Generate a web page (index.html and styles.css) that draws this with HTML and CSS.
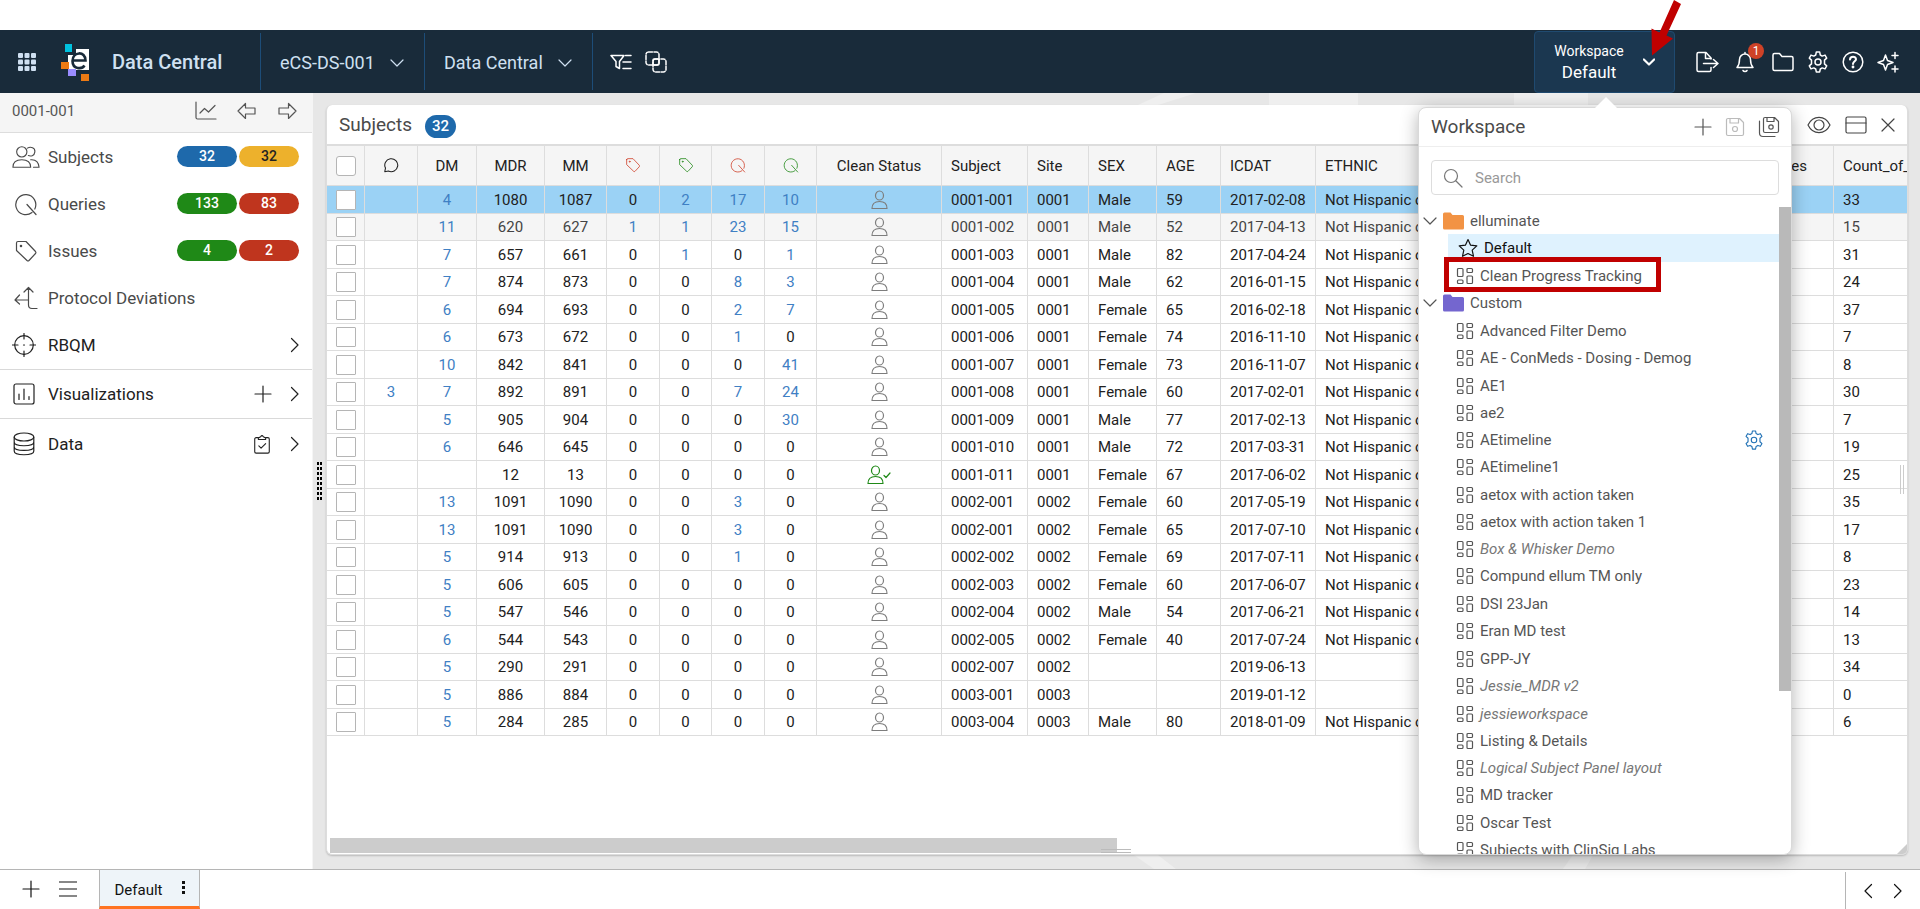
FILE: index.html
```
<!doctype html>
<html lang="en">
<head>
    <meta charset="UTF-8">
    <meta name="viewport" content="width=device-width, initial-scale=1.0">
    <title>Data Central</title>
    <link rel="stylesheet" href="styles.css">
</head>
<body>

<!-- icons -->
<svg class="sprite" aria-hidden="true">
    <symbol id="i-grid" viewBox="0 0 18 18"><g fill="currentColor"><rect width="5" height="5" rx="1"/><rect x="6.5" width="5" height="5" rx="1"/><rect x="13" width="5" height="5" rx="1"/><rect y="6.5" width="5" height="5" rx="1"/><rect x="6.5" y="6.5" width="5" height="5" rx="1"/><rect x="13" y="6.5" width="5" height="5" rx="1"/><rect y="13" width="5" height="5" rx="1"/><rect x="6.5" y="13" width="5" height="5" rx="1"/><rect x="13" y="13" width="5" height="5" rx="1"/></g></symbol>
    <symbol id="i-down" viewBox="0 0 14 14"><path d="M1 4l6 6 6-6"/></symbol>
    <symbol id="i-right" viewBox="0 0 10 16"><path d="M1.5 1.5L8 8l-6.500 6.500"/></symbol>
    <symbol id="i-left" viewBox="0 0 10 16"><path d="M8.500 1.500L2 8l6.500 6.500"/></symbol>
    <symbol id="i-filter" viewBox="0 0 22 18"><path d="M1 2.500h13L9.500 8.500v7l-3.500-2v-5z"/><path d="M15.500 2.500H21M13 9h8M13 15.500h8"/></symbol>
    <symbol id="i-overlap" viewBox="0 0 22 22"><rect x="1" y="1" width="13" height="13" rx="2.500" stroke-dasharray="4 1.500"/><rect x="8" y="8" width="13" height="13" rx="2.500" stroke-dasharray="4 1.500"/><rect x="8" y="8" width="6" height="6" rx="1"/></symbol>
    <symbol id="i-export" viewBox="0 0 24 24"><path d="M16 9V8l-5-5.500H3.500A1.500 1.500 0 0 0 2 4v16a1.500 1.500 0 0 0 1.500 1.500h11A1.500 1.500 0 0 0 16 20v-2.500"/><path d="M10.500 3v5.500H16M8.500 13.500h14M18.500 9.500l4.500 4-4.500 4"/></symbol>
    <symbol id="i-bell" viewBox="0 0 24 24"><path d="M4 17.500h16c-1.800-2-2.500-3.500-2.500-8a5.500 5.500 0 0 0-11 0c0 4.500-.7 6-2.500 8zM12 4V2.500M10 20.500c.8 1.300 3.200 1.300 4 0"/></symbol>
    <symbol id="i-folder" viewBox="0 0 24 24"><path d="M2 19V5a1.500 1.500 0 0 1 1.500-1.500h5l2.500 3h9.500A1.500 1.500 0 0 1 22 8v11a1.500 1.500 0 0 1-1.500 1.500h-17A1.500 1.500 0 0 1 2 19z"/></symbol>
    <symbol id="i-gear" viewBox="0 0 24 24"><path d="M10.300 2.100h3.400l.6 2.900 1.900 1.100 2.800-1 1.700 3-2.200 2v3.800l2.200 2-1.700 3-2.800-1-1.900 1.100-.6 2.900h-3.400l-.6-2.900-1.900-1.100-2.800 1-1.700-3 2.200-2v-3.800l-2.200-2 1.700-3 2.800 1 1.900-1.100z"/><circle cx="12" cy="12" r="3"/></symbol>
    <symbol id="i-help" viewBox="0 0 24 24"><circle cx="12" cy="12" r="9.800"/><path d="M9 9.500c.2-3.800 6-3.500 6-.3 0 2-3 2.300-3 4.800" stroke-width="2"/><circle cx="12" cy="17" r=".7"/></symbol>
    <symbol id="i-sparkle" viewBox="0 0 24 24"><path d="M9.500 5l2 5.500 5.500 2-5.500 2-2 5.500-2-5.500-5.500-2 5.500-2zM19 2.500v6M16 5.500h6M19 16v6M16 19h6"/></symbol>
    <symbol id="i-chart" viewBox="0 0 22 20"><path d="M1 1v15.500a1.500 1.500 0 0 0 1.500 1.500H21M5 12l4.500-4.500 4 3.500L20 4.500"/></symbol>
    <symbol id="i-back" viewBox="0 0 20 18"><path d="M1 9l7.500-7.500v4.500H18v6H8.500v4.500z"/></symbol>
    <symbol id="i-forward" viewBox="0 0 20 18"><path d="M19 9l-7.500-7.500v4.500H2v6h9.500v4.500z"/></symbol>
    <symbol id="i-people" viewBox="0 0 30 24"><circle cx="10.500" cy="6.500" r="5.500"/><path d="M1 23c0-5.500 3.500-8 9.500-8s9.500 2.500 9.500 8zM16.500 2.500c3.500-2 8.500-.5 8 4s-4.500 5-7 4M20 15c5.500-.5 8.500 3 9 8h-6"/></symbol>
    <symbol id="i-query" viewBox="0 0 24 24"><path d="M18 20.500A10 10 0 1 1 20.800 17M13 12.500l9 10"/></symbol>
    <symbol id="i-tag" viewBox="0 0 24 24"><path d="M2.500 4v7.500L13 21.500q1 .8 2 0l6.500-7q.8-1 0-2L12 2.500H4Q2.500 2.500 2.500 4z"/><circle cx="7" cy="7" r=".7"/></symbol>
    <symbol id="i-deviate" viewBox="0 0 24 24"><path d="M14.500 2v17q0 3.500 3.500 3.500h5M10 6l4.500-4.500L19 6M14.500 14H1M5.500 9L1 14l4.500 4"/></symbol>
    <symbol id="i-target" viewBox="0 0 24 24"><circle cx="12" cy="12" r="9.300"/><path d="M12 .5V6M12 18v5.500M.5 12H6M18 12h5.500M11.500 12h1"/></symbol>
    <symbol id="i-bars" viewBox="0 0 24 24"><rect x="2" y="2" width="20" height="20" rx="2"/><path d="M7 12v5.500M12 7v10.500M17 14.500v3"/></symbol>
    <symbol id="i-db" viewBox="0 0 24 24"><ellipse cx="12" cy="5" rx="9.800" ry="4"/><path d="M2.200 5v14c0 5 19.600 5 19.600 0V5M2.200 10c0 5 19.600 5 19.600 0M2.200 14.700c0 5 19.600 5 19.600 0"/></symbol>
    <symbol id="i-clip" viewBox="0 0 18 22"><path d="M5 4H2.500A1.500 1.500 0 0 0 1 5.500v14A1.500 1.500 0 0 0 2.500 21h13a1.500 1.500 0 0 0 1.500-1.500v-14A1.500 1.500 0 0 0 15.500 4H13M5 6V4.500L7.500 3q1.500-2.500 3 0L13 4.500V6zM5.500 13l2.500 2.500 5-5"/></symbol>
    <symbol id="i-plus" viewBox="0 0 18 18"><path d="M9 1v16M1 9h16"/></symbol>
    <symbol id="i-menu" viewBox="0 0 18 18"><path d="M0 2h18M0 9h18M0 16h18"/></symbol>
    <symbol id="i-save" viewBox="0 0 20 20"><path d="M3 1.500h11.500l4 4V17A1.500 1.500 0 0 1 17 18.500H3A1.500 1.500 0 0 1 1.500 17V3A1.500 1.500 0 0 1 3 1.500zM5 1.500v4.500h8.500v-4.500"/><circle cx="10" cy="12" r="2.500"/></symbol>
    <symbol id="i-saveall" viewBox="0 0 22 22"><path d="M7 1.500h9.500l4 4V15A1.500 1.500 0 0 1 19 16.500H7A1.500 1.500 0 0 1 5.500 15V3A1.500 1.500 0 0 1 7 1.500zM9 1.500v4h7v-4M1.500 5v12q0 3.500 3.500 3.500h12"/><circle cx="13" cy="11" r="2.200"/></symbol>
    <symbol id="i-eye" viewBox="0 0 24 18"><path d="M1 9C6 -1.200 18 -1.200 23 9 18 19.200 6 19.200 1 9z"/><circle cx="12" cy="9" r="5"/></symbol>
    <symbol id="i-layout" viewBox="0 0 22 18"><rect x="1" y="1" width="20" height="16" rx="1.500"/><path d="M1 7h20"/></symbol>
    <symbol id="i-close" viewBox="0 0 14 14"><path d="M1 1l12 12M13 1L1 13"/></symbol>
    <symbol id="i-chat" viewBox="0 0 18 18"><path d="M2 16.500l.8-4A7.300 7.300 0 1 1 6 15.700z"/></symbol>
    <symbol id="i-user" viewBox="0 0 20 20"><ellipse cx="8.500" cy="5.500" rx="4" ry="4.500"/><path d="M1 18.500c0-5 2.500-7 7.500-7s7.500 2 7.500 7z"/></symbol>
    <symbol id="i-check" viewBox="0 0 8 8"><path d="M1 4.500l2 2L7 2"/></symbol>
    <symbol id="i-search" viewBox="0 0 20 20"><circle cx="8" cy="8" r="6.500"/><path d="M13 13l6 6"/></symbol>
    <symbol id="i-star" viewBox="0 0 20 20"><path d="M10 1.500l2.600 5.700 6.200.7-4.600 4.200 1.300 6.200L10 15.500l-5.500 2.800 1.300-6.200L1.200 7.900l6.200-.7z"/></symbol>
    <symbol id="i-tiles" viewBox="0 0 18 18"><rect x="1.500" y="1.500" width="5.500" height="8" rx="1"/><rect x="11" y="1.500" width="5.500" height="4" rx="1"/><rect x="1.500" y="13" width="5.500" height="3.500" rx="1"/><rect x="11" y="9" width="5.500" height="7.500" rx="1"/></symbol>
    <symbol id="i-dir" viewBox="0 0 21 18"><path fill="currentColor" stroke="none" d="M0 16V2Q0 .5 1.500 .5h6l2 2.500h10Q21 3 21 4.500V16q0 1.500-1.500 1.500h-18Q0 17.500 0 16z"/></symbol>
</svg>

<header class="topbar">
    <button class="apps" aria-label="Apps"><svg class="ico s18"><use href="#i-grid"/></svg></button>
    <svg class="logo" viewBox="0 0 28 38" aria-hidden="true">
        <rect x="4" width="7" height="8" fill="#00c1de"/>
        <path fill="#fff" d="M15 5h13v21H7V11h8z"/>
        <rect y="18" width="8" height="7" fill="#ec7a14"/>
        <rect x="7" y="25" width="8" height="7" fill="#9a8cff"/>
        <rect x="20" y="30" width="8" height="7" fill="#ec7a14"/>
        <path fill="none" stroke="#192b3a" stroke-width="2.600" d="M12 16.500h12.500c0-10-13-9-13 .5 0 8.500 9.500 8.500 12 4.500"/>
    </svg>
    <div class="brand">Data Central</div>
    <button class="pick study">eCS-DS-001 <svg class="ico s14"><use href="#i-down"/></svg></button>
    <button class="pick module">Data Central <svg class="ico s14"><use href="#i-down"/></svg></button>
    <div class="tools">
        <button aria-label="Filter"><svg class="ico s22"><use href="#i-filter"/></svg></button>
        <button aria-label="Groups"><svg class="ico s22"><use href="#i-overlap"/></svg></button>
    </div>

    <div class="workspace">
        <button class="ws-btn">
            <span class="ws-text"><small>Workspace</small><b>Default</b></span>
            <svg class="ico s14"><use href="#i-down"/></svg>
        </button>
        <svg class="pointer" viewBox="0 0 32 56" aria-hidden="true"><path fill="#c00000" d="M24 0l7 4-14.500 31.500 6.500 3L2 55.500 1.500 28.500l8 4z"/></svg>
        <div class="popover">
            <div class="pop-head">
                <h2>Workspace</h2>
                <button aria-label="Add workspace"><svg class="ico s18"><use href="#i-plus"/></svg></button>
                <button aria-label="Save" disabled><svg class="ico s20"><use href="#i-save"/></svg></button>
                <button aria-label="Save as"><svg class="ico s22"><use href="#i-saveall"/></svg></button>
            </div>
            <label class="search">
                <svg class="ico s20"><use href="#i-search"/></svg>
                <input type="text" placeholder="Search" aria-label="Search">
            </label>
            <div class="tree-wrap">
                <ul class="tree" id="tree"></ul>
                <div class="vbar"></div>
            </div>
        </div>
    </div>

    <div class="actions">
        <button aria-label="Export"><svg class="ico s24"><use href="#i-export"/></svg></button>
        <button aria-label="Notifications" class="bell"><svg class="ico s24"><use href="#i-bell"/></svg><span>1</span></button>
        <button aria-label="Files"><svg class="ico s24"><use href="#i-folder"/></svg></button>
        <button aria-label="Settings"><svg class="ico s24"><use href="#i-gear"/></svg></button>
        <button aria-label="Help"><svg class="ico s24"><use href="#i-help"/></svg></button>
        <button aria-label="Assistant"><svg class="ico s24"><use href="#i-sparkle"/></svg></button>
    </div>
</header>

<div class="main">
    <nav class="side">
        <div class="side-head">
            <span>0001-001</span>
            <button aria-label="Chart"><svg class="ico s22"><use href="#i-chart"/></svg></button>
            <button aria-label="Previous"><svg class="ico s20"><use href="#i-back"/></svg></button>
            <button aria-label="Next"><svg class="ico s20"><use href="#i-forward"/></svg></button>
        </div>
        <a class="item" href="#"><i><svg class="ico s28"><use href="#i-people"/></svg></i>Subjects<span class="pill blue">32</span><span class="pill yellow">32</span></a>
        <a class="item" href="#"><i><svg class="ico s24"><use href="#i-query"/></svg></i>Queries<span class="pill green">133</span><span class="pill red">83</span></a>
        <a class="item" href="#"><i><svg class="ico s24"><use href="#i-tag"/></svg></i>Issues<span class="pill green">4</span><span class="pill red">2</span></a>
        <a class="item" href="#"><i><svg class="ico s24"><use href="#i-deviate"/></svg></i>Protocol Deviations</a>
        <div class="section">
            <svg class="ico s24"><use href="#i-target"/></svg><span>RBQM</span>
            <button aria-label="Open RBQM"><svg class="ico s16"><use href="#i-right"/></svg></button>
        </div>
        <div class="section">
            <svg class="ico s24"><use href="#i-bars"/></svg><span>Visualizations</span>
            <button aria-label="Add visualization"><svg class="ico s18"><use href="#i-plus"/></svg></button>
            <button aria-label="Open visualizations"><svg class="ico s16"><use href="#i-right"/></svg></button>
        </div>
        <div class="section last">
            <svg class="ico s24"><use href="#i-db"/></svg><span>Data</span>
            <button aria-label="Review data"><svg class="ico s20"><use href="#i-clip"/></svg></button>
            <button aria-label="Open data"><svg class="ico s16"><use href="#i-right"/></svg></button>
        </div>
    </nav>

    <div class="gutter"><div class="grip"></div></div>

    <div class="stage">
        <!-- background pattern -->
        <svg class="deco top" aria-hidden="true"><path d="M832 12L870 0h-32l-26 12zM943 0h89v12h-89zM1188 0h74v12h-74z"/></svg>
        <svg class="deco bottom" aria-hidden="true"><path d="M808 0l20 14h22L832 0zM1247 0h20l-8 14h-22z"/></svg>
        <section class="panel">
            <div class="panel-head">
                <h1>Subjects</h1><span class="count">32</span>
                <button aria-label="Show columns"><svg class="ico s24"><use href="#i-eye"/></svg></button>
                <button aria-label="Layout"><svg class="ico s22"><use href="#i-layout"/></svg></button>
                <button aria-label="Close"><svg class="ico s14"><use href="#i-close"/></svg></button>
            </div>
            <div class="grid">
                <table>
                    <colgroup>
                        <col class="w38"><col class="w53"><col class="w59"><col class="w68"><col class="w62">
                        <col class="w53"><col class="w52"><col class="w53"><col class="w52"><col class="w125">
                        <col class="w86"><col class="w61"><col class="w68"><col class="w64"><col class="w95">
                        <col class="w364"><col class="w154"><col class="w154">
                    </colgroup>
                    <thead>
                    <tr>
                        <th class="c"><input type="checkbox" aria-label="Select all"></th>
                        <th class="c"><svg class="ico s16"><use href="#i-chat"/></svg></th>
                        <th class="c">DM</th>
                        <th class="c">MDR</th>
                        <th class="c">MM</th>
                        <th class="c t-red"><svg class="ico s16"><use href="#i-tag"/></svg></th>
                        <th class="c t-green"><svg class="ico s16"><use href="#i-tag"/></svg></th>
                        <th class="c t-red"><svg class="ico s16"><use href="#i-query"/></svg></th>
                        <th class="c t-green"><svg class="ico s16"><use href="#i-query"/></svg></th>
                        <th class="c">Clean Status</th>
                        <th>Subject</th>
                        <th>Site</th>
                        <th>SEX</th>
                        <th>AGE</th>
                        <th>ICDAT</th>
                        <th>ETHNIC</th>
                        <th>Count_of_Queries</th>
                        <th>Count_of_Issues</th>
                    </tr>
                    </thead>
                    <tbody id="rows"></tbody>
                </table>
            </div>
            <div class="hbar"></div>
            <div class="edge-h"></div>
            <div class="edge-v"></div>
            <div class="corner"></div>
        </section>
    </div>
</div>

<footer class="tabs">
    <button aria-label="Add tab"><svg class="ico s18"><use href="#i-plus"/></svg></button>
    <button aria-label="List tabs"><svg class="ico s18"><use href="#i-menu"/></svg></button>
    <button class="tab">Default <span class="dots"></span></button>
    <div class="pager">
        <button aria-label="Previous tab"><svg class="ico s16"><use href="#i-left"/></svg></button>
        <button aria-label="Next tab"><svg class="ico s16"><use href="#i-right"/></svg></button>
    </div>
</footer>

<script src="script.js"></script>
</body>
</html>
```
FILE: styles.css
```
*{
    box-sizing: border-box;
}
body{
    margin:0;
    padding-top:30px;
    min-height:100vh;
    display: flex;
    flex-direction: column;
    background-color: #fff;
    color:#212121;
    font-family: Roboto, "Liberation Sans", sans-serif;
    font-size:15px;
}
button{
    display: flex;
    align-items: center;
    justify-content: center;
    padding:0;
    border:0;
    background: none;
    color:inherit;
    font:inherit;
    cursor:pointer;
}
a{
    color:inherit;
    text-decoration: none;
}
h1,h2{
    margin:0;
    font-size:19px;
    font-weight: 400;
    color:#4a4a4a;
}

/* icons */
.sprite{
    position: absolute;
    width:0;
    height:0;
}
.ico{
    flex:none;
    fill:none;
    stroke:currentColor;
    stroke-width:1.2;
    stroke-linecap: round;
    stroke-linejoin: round;
}
.s14{ width:14px; height:14px; }
.s16{ width:16px; height:16px; }
.s18{ width:18px; height:18px; }
.s20{ width:20px; height:20px; }
.s22{ width:22px; height:22px; }
.s24{ width:24px; height:24px; }
.s28{ width:28px; height:24px; }

/* top bar */
.topbar{
    display: flex;
    height:63px;
    padding-right:20px;
    background-color: #192b3a;
    color:#cfe0f1;
}
.topbar .s24,.tools .ico{
    stroke-width:1.5;
}
.apps{
    width:54px;
}
.apps .ico{
    stroke:none;
}
.logo{
    width:28px;
    height:38px;
    margin:14px 0 0 7px;
}
.brand{
    width:171px;
    padding-left:23px;
    line-height:64px;
    font-size:20px;
    font-weight: 500;
}
.pick{
    justify-content: space-between;
    margin:3px 0;
    padding:2px 20px 0 19px;
    border-left:1px solid #1d4d78;
    font-size:18px;
}
.study{
    width:164px;
}
.module{
    width:168px;
}
.tools{
    display: flex;
    gap:13px;
    margin:3px 0;
    padding-left:17px;
    border-left:1px solid #1d4d78;
    color:#fff;
}
.workspace{
    position: relative;
    margin-left:auto;
    color:#fff;
}
.ws-btn{
    width:141px;
    height:62px;
    margin-top:1px;
    gap:19px;
    border:1px solid #1f4a70;
    border-radius: 4px;
    background-color: #1b3750;
}
.ws-btn .ico{
    width:12px;
    stroke-width:2.5;
}
.ws-text{
    display: flex;
    flex-direction: column;
    align-items: center;
    line-height:21px;
}
.ws-text small{
    font-size:14px;
}
.ws-text b{
    font-size:17px;
    font-weight: 400;
}
.pointer{
    position: absolute;
    z-index:3;
    left:116px;
    top:-30px;
    width:32px;
    height:56px;
}
.actions{
    display: flex;
    gap:11px;
    margin-left:20px;
    color:#fff;
}
.actions button:nth-child(-n+2){
    margin-right:3px;
}
.bell{
    position: relative;
}
.bell span{
    position: absolute;
    left:15px;
    top:13px;
    width:16px;
    height:16px;
    border-radius: 50%;
    background-color: #cf4227;
    font-size:12px;
    line-height:16px;
    text-align: center;
}

/* workspace popover */
.popover{
    position: absolute;
    z-index:2;
    right:-117px;
    top:77px;
    display: flex;
    flex-direction: column;
    width:374px;
    height:calc(100vh - 161px);
    border:1px solid #d9d9d9;
    border-radius: 8px;
    background-color: #fff;
    box-shadow: 0 4px 18px rgba(0,0,0,.3);
    color:#555;
}
.popover:before{
    content:"";
    position: absolute;
    right:174px;
    top:-11px;
    border:11px solid transparent;
    border-top:0;
    border-bottom-color:#fff;
}
.pop-head{
    display: flex;
    align-items: center;
    gap:13px;
    height:39px;
    padding:0 11px 1px 12px;
    border-bottom:1px solid #eee;
}
.pop-head h2{
    flex:1;
}
.pop-head button:disabled{
    color:#bbb;
}
.search{
    display: flex;
    align-items: center;
    gap:10px;
    margin:13px 12px 12px;
    padding:0 11px;
    height:35px;
    border:1px solid #ddd;
    border-radius: 4px;
    color:#777;
}
.search input{
    flex:1;
    border:0;
    outline:0;
    font:inherit;
}
.search input::placeholder{
    color:#999;
}
.tree-wrap{
    display: flex;
    flex:1;
    min-height:0;
    overflow: hidden;
    border-radius: 0 0 8px 8px;
}
.tree{
    flex:1;
    margin:0;
    padding:0 0 0 4px;
    list-style: none;
}
.tree li{
    position: relative;
    display: flex;
    align-items: center;
    height:27px;
    margin-left:25px;
    padding-left:8px;
    gap:6px;
}
.tree li:nth-child(4n+2){
    height:28px;
}
.tree li:nth-child(6n+4){
    height:28px;
}
.tree .folder{
    margin-left:0;
    padding-left:0;
}
.tree .folder .s20{
    width:21px;
}
.orange{
    color:#f29344;
}
.purple{
    color:#7466cf;
}
.tree .on{
    padding-left:10px;
    background-color: #dff2fe;
    color:#111;
}
.tree .shared{
    color:#777;
    font-style: italic;
}
.tree .shared .ico{
    color:#555;
}
.tree .cog{
    margin-left:auto;
    margin-right:14px;
    color:#1f70b5;
}
.mark{
    position: absolute;
    left:-4px;
    top:-5px;
    width:217px;
    height:35px;
    border:5px solid #c00000;
}
.vbar{
    width:12px;
    height:484px;
    background-color: #b9b9b9;
}

/* main */
.main{
    display: flex;
    flex:1;
    background-color: #e7e7e7;
}
.side{
    width:313px;
    border-right:1px solid #f5f5f5;
    background-color: #fff;
    font-size:17px;
}
.side-head{
    display: flex;
    align-items: center;
    gap:20px;
    height:40px;
    padding:0 15px 4px 12px;
    border-bottom:1px solid #ddd;
    background-color: #f5f5f5;
    color:#555;
    font-size:15px;
}
.side-head span{
    flex:1;
}
.item{
    display: flex;
    align-items: center;
    height:47px;
    padding:0 13px 0 12px;
    color:#4a4a4a;
}
.item i{
    display: flex;
    justify-content: center;
    width:28px;
    margin-right:8px;
}
.pill{
    width:60px;
    margin-left:2px;
    border-radius: 11px;
    color:#fff;
    font-size:14px;
    font-weight: 500;
    line-height:21px;
    text-align: center;
}
.item i ~ .pill:nth-child(2){
    margin-left:auto;
}
.blue{ background-color: #1e69ab; }
.yellow{ background-color: #edb12c; color:#222; }
.green{ background-color: #1f8917; }
.red{ background-color: #bf351e; }
.section{
    display: flex;
    align-items: center;
    gap:12px;
    height:49px;
    padding:0 9px 0 12px;
    border-bottom:1px solid #d9d9d9;
}
.section span{
    flex:1;
}
.section button:last-child{
    margin-left:3px;
}
.section.last{
    border:0;
}
.gutter{
    display: flex;
    align-items: center;
    width:13px;
    padding-left:4px;
}
.grip{
    width:5px;
    height:38px;
    background: repeating-linear-gradient(#000 0 3px, transparent 3px 5px);
    -webkit-mask: linear-gradient(90deg, #000 2px, transparent 2px 3px, #000 3px);
}
.stage{
    position: relative;
    display: flex;
    flex:1;
    min-width:0;
    padding:12px 12px 14px 0;
}
.deco{
    position: absolute;
    left:0;
    width:100%;
    fill:#efefef;
}
.deco.top{ top:0; height:12px; }
.deco.bottom{ bottom:0; height:14px; }

/* subjects panel */
.panel{
    position: relative;
    display: flex;
    flex-direction: column;
    flex:1;
    min-width:0;
    border:1px solid #ddd;
    border-top:0;
    border-radius: 6px;
    background-color: #fff;
    overflow: hidden;
    box-shadow: 0 1px 2px rgba(0,0,0,.2);
}
.panel-head{
    display: flex;
    align-items: center;
    gap:14px;
    height:41px;
    padding:0 12px;
    border-bottom:2px solid #ddd;
    color:#444;
}
.count{
    margin:3px auto 0 0;
    margin-left:-1px;
    padding:0 7px;
    border-radius: 12px;
    background-color: #1e69ab;
    color:#fff;
    font-size:15px;
    font-weight: 500;
    line-height:23px;
}
.grid{
    flex:1;
    overflow: hidden;
}
table{
    table-layout: fixed;
    width:1661px;
    border-spacing:0;
}
.w38{ width:38px; }
.w52{ width:52px; }
.w53{ width:53px; }
.w59{ width:59px; }
.w61{ width:61px; }
.w62{ width:62px; }
.w64{ width:64px; }
.w68{ width:68px; }
.w86{ width:86px; }
.w95{ width:95px; }
.w125{ width:125px; }
.w154{ width:154px; }
.w364{ width:364px; }
th,td{
    padding:0 0 0 9px;
    border-right:1px solid #ddd;
    border-bottom:1px solid #ddd;
    font-weight: 400;
    text-align: left;
    white-space: nowrap;
}
th{
    height:40px;
    background-color: #f5f5f5;
}
td{
    height:27px;
}
tr:nth-child(odd) td{
    height:28px;
}
.c{
    padding:0;
    text-align: center;
}
td a{
    color:#3f80c4;
}
th .ico,td .ico{
    display: inline-block;
    vertical-align: middle;
}
th .ico{
    margin-top:-3px;
}
.t-red{ color:#cf3f28; }
.t-green{ color:#1f8917; }
.user .ico{
    color:#7d7d7d;
}
.user .s20{
    margin-right:-3px;
}
.user .s14{
    width:8px;
    margin-left:-1px;
}
.user.t-green .ico{
    color:#1f8917;
}
tr.sel td{
    background-color: #9bd2f5;
}
tr.hover td{
    background-color: #f5f5f5;
    color:#444;
}
td input,th input{
    appearance: none;
    display: block;
    width:20px;
    height:20px;
    margin:0 0 0 9px;
    border:1px solid #b5b5b5;
    border-radius: 1px;
    background-color: #fff;
}
th input{
    border-radius: 3px;
}
.hbar{
    width:calc(50% - 3px);
    height:15px;
    margin:0 0 1px 3px;
    background-color: #ccc;
}
.edge-h{
    position: absolute;
    left:49%;
    bottom:1px;
    width:30px;
    height:4px;
    border:solid #bbb;
    border-width:1px 0;
}
.edge-v{
    position: absolute;
    right:3px;
    top:48%;
    width:4px;
    height:29px;
    border:solid #ccc;
    border-width:0 1px;
}
.corner{
    position: absolute;
    right:0;
    bottom:0;
    border:5px solid #ccc;
    border-top-color:transparent;
    border-left-color:transparent;
}

/* bottom tabs */
.tabs{
    display: flex;
    height:40px;
    padding-left:22px;
    border-top:1px solid #b5b5b5;
    color:#111;
}
.tabs > button{
    margin-right:19px;
    padding-bottom:2px;
}
.tabs .tab{
    width:101px;
    margin-left:3px;
    padding:4px 0 0;
    gap:19px;
    border:solid #b5b5b5;
    border-width:0 1px;
    border-bottom:3px solid #ff7322;
    background-color: #eef4f9;
}
.dots{
    width:3px;
    height:15px;
    margin-top:-6px;
    background: radial-gradient(circle, #111 1px, #111 2px, transparent 2px) 0 0 / 3px 5px;
}
.pager{
    display: flex;
    gap:14px;
    margin:2px 14px 0 auto;
    padding-left:14px;
    border-left:1px solid #b5b5b5;
}
```
FILE: script.js
```
// comment, DM, MDR, MM, open issues, closed issues, open queries, closed queries,
// subject, site, sex, age, icdat, count
var data = [
    ['', 4, 1080, 1087, 0, 2, 17, 10, '0001-001', '0001', 'Male', 59, '2017-02-08', 33],
    ['', 11, 620, 627, 1, 1, 23, 15, '0001-002', '0001', 'Male', 52, '2017-04-13', 15],
    ['', 7, 657, 661, 0, 1, 0, 1, '0001-003', '0001', 'Male', 82, '2017-04-24', 31],
    ['', 7, 874, 873, 0, 0, 8, 3, '0001-004', '0001', 'Male', 62, '2016-01-15', 24],
    ['', 6, 694, 693, 0, 0, 2, 7, '0001-005', '0001', 'Female', 65, '2016-02-18', 37],
    ['', 6, 673, 672, 0, 0, 1, 0, '0001-006', '0001', 'Female', 74, '2016-11-10', 7],
    ['', 10, 842, 841, 0, 0, 0, 41, '0001-007', '0001', 'Female', 73, '2016-11-07', 8],
    [3, 7, 892, 891, 0, 0, 7, 24, '0001-008', '0001', 'Female', 60, '2017-02-01', 30],
    ['', 5, 905, 904, 0, 0, 0, 30, '0001-009', '0001', 'Male', 77, '2017-02-13', 7],
    ['', 6, 646, 645, 0, 0, 0, 0, '0001-010', '0001', 'Male', 72, '2017-03-31', 19],
    ['', '', 12, 13, 0, 0, 0, 0, '0001-011', '0001', 'Female', 67, '2017-06-02', 25],
    ['', 13, 1091, 1090, 0, 0, 3, 0, '0002-001', '0002', 'Female', 60, '2017-05-19', 35],
    ['', 13, 1091, 1090, 0, 0, 3, 0, '0002-001', '0002', 'Female', 65, '2017-07-10', 17],
    ['', 5, 914, 913, 0, 0, 1, 0, '0002-002', '0002', 'Female', 69, '2017-07-11', 8],
    ['', 5, 606, 605, 0, 0, 0, 0, '0002-003', '0002', 'Female', 60, '2017-06-07', 23],
    ['', 5, 547, 546, 0, 0, 0, 0, '0002-004', '0002', 'Male', 54, '2017-06-21', 14],
    ['', 6, 544, 543, 0, 0, 0, 0, '0002-005', '0002', 'Female', 40, '2017-07-24', 13],
    ['', 5, 290, 291, 0, 0, 0, 0, '0002-007', '0002', '', '', '2019-06-13', 34],
    ['', 5, 886, 884, 0, 0, 0, 0, '0003-001', '0003', '', '', '2019-01-12', 0],
    ['', 5, 284, 285, 0, 0, 0, 0, '0003-004', '0003', 'Male', 80, '2018-01-09', 6]
];

function icon(id, size, cls) {
    return '<svg class="ico ' + size + ' ' + (cls || '') + '"><use href="#i-' + id + '"/></svg>';
}

var html = '';
for (var i = 0; i < data.length; i++) {
    var r = data[i];
    var clean = r[8] == '0001-011';
    html += '<tr class="' + (i == 0 ? 'sel' : i == 1 ? 'hover' : '') + '">';
    html += '<td class="c"><input type="checkbox" aria-label="Select row ' + (i + 1) + '"></td>';
    for (var j = 0; j < 8; j++) {
        // MDR and MM are plain numbers, other non-zero counts are links
        var link = r[j] && j != 2 && j != 3;
        html += '<td class="c">' + (link ? '<a href="#">' + r[j] + '</a>' : r[j]) + '</td>';
    }
    html += '<td class="c user ' + (clean ? 't-green' : '') + '">' + icon('user', 's20') + (clean ? icon('check', 's14') : '') + '</td>';
    for (j = 8; j < 13; j++) {
        html += '<td>' + r[j] + '</td>';
    }
    html += '<td>' + (r[10] ? 'Not Hispanic or Latino' : '') + '</td><td></td><td>' + r[13] + '</td></tr>';
}
document.getElementById('rows').innerHTML = html;

// names with a leading * are shared workspaces
var custom = ['Advanced Filter Demo', 'AE - ConMeds - Dosing - Demog', 'AE1', 'ae2', 'AEtimeline', 'AEtimeline1',
    'aetox with action taken', 'aetox with action taken 1', '*Box &amp; Whisker Demo', 'Compund ellum TM only',
    'DSI 23Jan', 'Eran MD test', 'GPP-JY', '*Jessie_MDR v2', '*jessieworkspace', 'Listing &amp; Details',
    '*Logical Subject Panel layout', 'MD tracker', 'Oscar Test', 'Subjects with ClinSig Labs'];

function folder(name, color) {
    return '<li class="folder">' + icon('down', 's14') + icon('dir', 's20', color) + name + '</li>';
}

html = folder('elluminate', 'orange');
html += '<li class="on">' + icon('star', 's20') + 'Default</li>';
html += '<li>' + icon('tiles', 's18') + 'Clean Progress Tracking<span class="mark"></span></li>';
html += folder('Custom', 'purple');
for (i = 0; i < custom.length; i++) {
    var shared = custom[i].charAt(0) == '*';
    html += '<li class="' + (shared ? 'shared' : '') + '">' + icon('tiles', 's18') + custom[i].replace('*', '');
    html += (custom[i] == 'AEtimeline' ? icon('gear', 's22', 'cog') : '') + '</li>';
}
document.getElementById('tree').innerHTML = html;
```
